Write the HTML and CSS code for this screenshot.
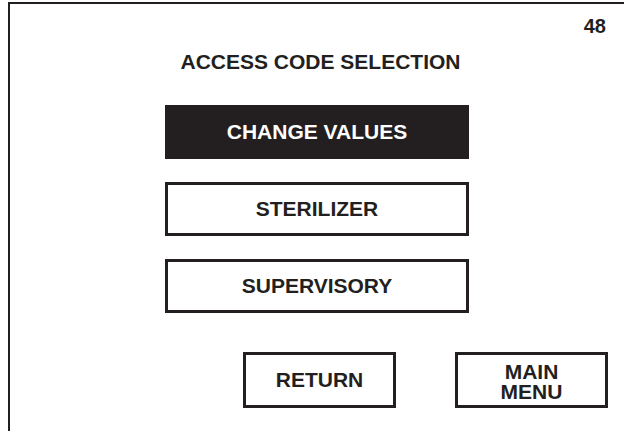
FILE: index.html
```html
<!DOCTYPE html>
<html>
<head>
<meta charset="utf-8">
<link rel="stylesheet" href="styles.css">
</head>
<body>
<div class="frame">
  <div class="page-num">48</div>
  <div class="title">ACCESS CODE SELECTION</div>
  <div class="menu">
    <div class="btn btn-active">CHANGE VALUES</div>
    <div class="btn">STERILIZER</div>
    <div class="btn">SUPERVISORY</div>
  </div>
  <div class="footer">
    <div class="btn btn-small">RETURN</div>
    <div class="btn btn-small btn-two"><span>MAIN</span><span>MENU</span></div>
  </div>
</div>
</body>
</html>
```
FILE: styles.css
```css
html, body {
  margin: 0;
  padding: 0;
  background: #fff;
}
body {
  font-family: "Liberation Sans", Arial, sans-serif;
  font-weight: bold;
  color: #231f20;
  overflow: hidden;
}
.frame {
  margin: 2px 0 0 8px;
  border-top: 2px solid #231f20;
  border-left: 2px solid #231f20;
  height: 440px;
  box-sizing: border-box;
}
.page-num {
  font-size: 20px;
  line-height: 22px;
  text-align: right;
  padding-right: 18px;
  margin-top: 11px;
}
.title {
  font-size: 21px;
  line-height: 24px;
  text-align: center;
  margin-top: 13px;
  padding-left: 7px;
}
.menu {
  display: flex;
  flex-direction: column;
  align-items: center;
  gap: 23px;
  margin-top: 31px;
}
.btn {
  box-sizing: border-box;
  width: 304px;
  height: 54px;
  border: 3px solid #231f20;
  display: flex;
  align-items: center;
  justify-content: center;
  font-size: 21px;
  line-height: 22px;
  text-align: center;
}
.btn-active {
  background: #231f20;
  color: #fff;
  border-color: #231f20;
}
.footer {
  display: flex;
  gap: 59px;
  padding-left: 233px;
  margin-top: 39px;
}
.btn-small {
  width: 153px;
  height: 56px;
}
.btn-two {
  flex-direction: column;
  font-size: 21px;
  line-height: 20px;
  padding-top: 3px;
}
```
